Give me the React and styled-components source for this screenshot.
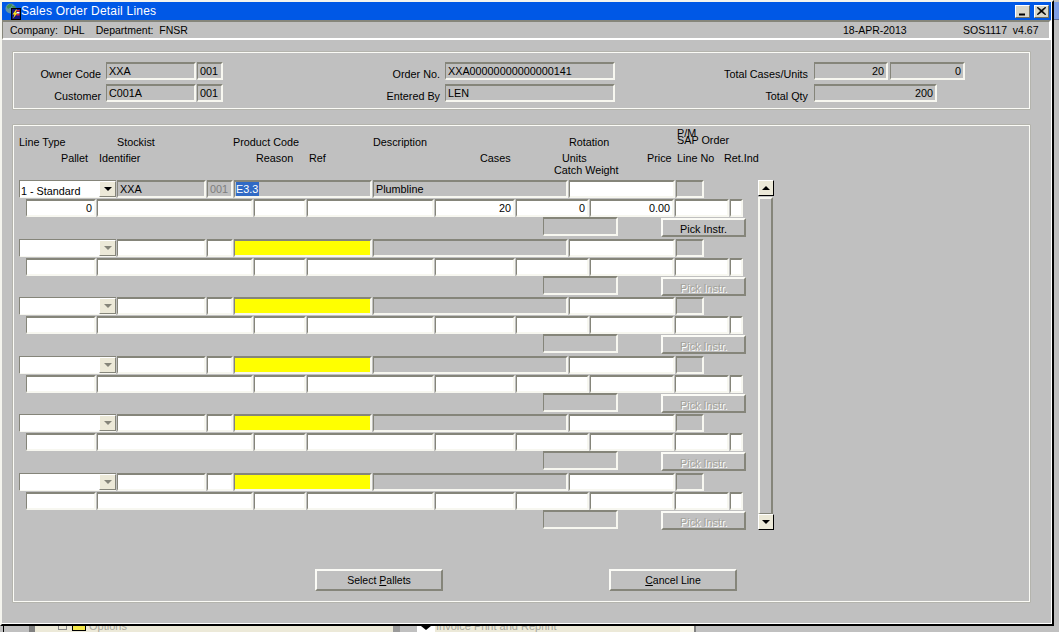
import React from "react";
import styled, { createGlobalStyle } from "styled-components";

const Global = createGlobalStyle`
  html, body { margin: 0; padding: 0; overflow: hidden; background: #c0c0c0; }
  #root { width: 1059px; height: 632px; overflow: hidden; }
  * { box-sizing: border-box; }
`;

const Desktop = styled.div`
  display: grid;
  grid-template-columns: 1054px 5px;
  grid-template-rows: 626px 6px;
  width: 1059px;
  height: 632px;
  font-family: "Liberation Sans", Arial, sans-serif;
  font-size: 10.8px;
  color: #000;
`;

const Win = styled.div`
  display: flex;
  flex-direction: column;
  border-left: 2px solid #f4f4ee;
  border-top: 2px solid #f4f4ee;
  border-right: 2px solid #000;
  border-bottom: 2px solid #000;
  background: #c0c0c0;
  box-shadow: inset -1px -1px 0 #fff;
`;

const SideStrip = styled.div`
  padding-top: 2px;
  background: #c0c0c0;
`;
const SideTitle = styled.div`
  height: 18px;
  background: #7f9fe6;
  border-bottom: 1px solid #5f6f9a;
`;

const BottomStrip = styled.div`
  grid-column: 1 / 3;
  display: flex;
  height: 6px;
  overflow: hidden;
  background: #c0c0c0;
`;
const Seg = styled.div`
  flex: 0 0 ${(p) => p.$w}px;
  background: ${(p) => p.$bg};
  display: flex;
  align-items: flex-start;
  justify-content: ${(p) => (p.$center ? "center" : "flex-start")};
  height: 6px;
  padding-left: ${(p) => p.$pad || 0}px;
  gap: 3px;
`;
const TreeText = styled.span`
  font-size: 11px;
  line-height: 11px;
  margin-top: -5px;
  color: #a5a59b;
  white-space: nowrap;
`;
const FolderGlyph = styled.span`
  flex: 0 0 14px;
  height: 5px;
  background: #f5e94a;
  border-bottom: 1px solid #000;
  border-right: 1px solid #000;
  border-left: 1px solid #000;
`;
const PlusGlyph = styled.span`
  flex: 0 0 9px;
  height: 4px;
  margin-right: 2px;
  border: 1px solid #888;
  border-top: 0;
`;
const ArrowGlyph = styled.span`
  width: 0;
  height: 0;
  border-left: 5px solid transparent;
  border-right: 5px solid transparent;
  border-top: 4px solid #000;
`;

const TitleBar = styled.div`
  display: flex;
  align-items: center;
  height: 18px;
  margin-right: 1px;
  padding: 0 2px 0 3px;
  background: #0058e6;
  color: #fff;
  font-size: 12px;
  letter-spacing: 0.22px;
`;
const TitleText = styled.span`
  margin-left: -1px;
  flex: 1;
`;
const WinBtn = styled.div`
  display: flex;
  align-items: center;
  justify-content: center;
  width: 15px;
  height: 13px;
  margin-left: ${(p) => p.$ml || 0}px;
  background: #d8d6c8;
  border: 1px solid;
  border-color: #fff #6e6e60 #6e6e60 #fff;
`;

const InfoBar = styled.div`
  display: flex;
  align-items: flex-end;
  height: 20px;
  margin-right: 1px;
  padding: 0 9px 1px 7px;
  border-top: 2px solid #85857a;
  border-left: 1px solid #85857a;
  border-bottom: 2px solid #fff;
  border-right: 2px solid #fff;
  font-size: 10.5px;
  line-height: 13px;
`;
const InfoGroup = styled.div`
  display: flex;
  flex: 0 0 ${(p) => p.$w}px;
  gap: 11px;
`;
const InfoCell = styled.span`
  white-space: pre;
`;

const Content = styled.div`
  display: flex;
  flex-direction: column;
  padding: 12px 0 0 11px;
`;

const Panel = styled.div`
  width: 1017px;
  height: ${(p) => p.$h}px;
  margin-bottom: ${(p) => p.$mb || 0}px;
  border: 1px solid #fbfbf6;
  box-shadow: 0 0 0 0.5px #a9a99b;
`;
const TopPanel = styled(Panel)`
  display: flex;
  flex-direction: column;
  gap: 4px;
  padding-top: 9px;
`;
const Row = styled.div`
  display: flex;
  align-items: stretch;
  height: 18px;
  gap: ${(p) => p.$gap ?? 0}px;
  margin-top: ${(p) => p.$mt || 0}px;
  padding-left: ${(p) => p.$pl || 0}px;
`;
const RightLabel = styled.div`
  flex: 0 0 ${(p) => p.$w}px;
  margin-right: ${(p) => p.$mr ?? 5}px;
  text-align: right;
  line-height: 24px;
  white-space: nowrap;
`;

const Field = styled.div`
  flex: 0 0 ${(p) => p.$w}px;
  height: ${(p) => p.$h || 18}px;
  margin-left: ${(p) => p.$ml || 0}px;
  margin-right: ${(p) => p.$mr || 0}px;
  padding: 0 2px 0 2px;
  border: 2px solid;
  border-color: #85857a #f7f7f0 #f7f7f0 #85857a;
  border-width: 2px 2px 2px 1px;
  background: ${(p) => (p.$kind === "input" ? "#fff" : p.$kind === "req" ? "#ffff00" : "#bfbfbf")};
  color: ${(p) => (p.$off ? "#7d7d7d" : "#000")};
  text-align: ${(p) => (p.$right ? "right" : "left")};
  line-height: 15px;
  white-space: nowrap;
  overflow: hidden;
`;
const Selected = styled.span`
  display: inline-block;
  margin-left: -1px;
  padding: 0 1px 0 0;
  background: #316ac5;
  color: #fff;
  line-height: 14px;
`;

const Combo = styled.div`
  flex: 0 0 97px;
  display: flex;
  justify-content: space-between;
  height: 18px;
  padding-left: 1px;
  border-top: 1px solid #85857a;
  border-left: 1px solid #85857a;
  border-bottom: 1px solid #f7f7f0;
  background: #fff;
  line-height: 20px;
`;
const ComboBtn = styled.div`
  display: flex;
  align-items: center;
  justify-content: center;
  width: 17px;
  height: 16px;
  background: #ece9d8;
  border: 1px solid;
  border-color: #fff #85857a #85857a #fff;
`;
const Tri = styled.span`
  width: 0;
  height: 0;
  border-left: 4px solid transparent;
  border-right: 4px solid transparent;
  ${(p) => (p.$up ? "border-bottom" : "border-top")}: 4px solid ${(p) => p.$color || "#000"};
`;

const HeadBlock = styled.div`
  height: 54px;
  padding: 0 0 0 5px;
`;
const HeadRow = styled.div`
  display: flex;
  align-items: flex-end;
  height: ${(p) => p.$h}px;
  line-height: 12px;
  white-space: nowrap;
`;
const HeadCell = styled.div`
  flex: 0 0 ${(p) => p.$w}px;
  text-align: ${(p) => (p.$right ? "right" : "left")};
  margin-left: ${(p) => p.$ml || 0}px;
`;
const SapStack = styled.div`
  display: flex;
  flex-direction: column;
  padding-bottom: 2px;
`;
const Pm = styled.div`
  line-height: 7px;
  height: 7px;
  margin-bottom: -3px;
`;

const GridArea = styled.div`
  display: flex;
  padding-left: 5px;
`;
const Records = styled.div`
  flex: 0 0 739px;
`;
const Record = styled.div`
  height: ${(p) => p.$h}px;
`;
const BtnRow = styled.div`
  display: flex;
  align-items: flex-start;
  margin-left: 524px;
`;
const PickBtn = styled.div`
  flex: 0 0 85px;
  height: 19px;
  margin: 1px 0 0 43px;
  background: #c0c0c0;
  border: 2px solid;
  border-color: #fbfbf6 #85857a #85857a #fbfbf6;
  text-align: center;
  line-height: 18px;
  color: ${(p) => (p.$off ? "#a3a39b" : "#000")};
  text-shadow: ${(p) => (p.$off ? "1px 1px 0 #fff" : "none")};
`;

const Scrollbar = styled.div`
  flex: 0 0 16px;
  display: flex;
  flex-direction: column;
  height: 350px;
`;
const ScrollBtn = styled.div`
  display: flex;
  align-items: center;
  justify-content: center;
  height: 16px;
  background: #ece9d8;
  border: 1px solid;
  border-color: #fff #000 #000 #fff;
`;
const ScrollTrack = styled.div`
  flex: 1;
  margin: 1px 1px 0 0;
  background: #c0c0c0;
  border: 2px solid;
  border-color: #f7f7f0 #85857a #85857a #f7f7f0;
  border-bottom-width: 1px;
`;

const Actions = styled.div`
  display: flex;
  margin: 38px 0 0 301px;
  font-size: 10.5px;
`;
const ActionBtn = styled.div`
  flex: 0 0 128px;
  height: 22px;
  margin-right: ${(p) => p.$mr || 0}px;
  border: 2px solid;
  border-color: #fbfbf6 #85857a #85857a #fbfbf6;
  background: #c0c0c0;
  text-align: center;
  line-height: 18px;
`;
const Key = styled.span`
  text-decoration: underline;
`;

const GlobeIcon = () => (
  <svg width="17" height="17" viewBox="0 0 17 17">
    <circle cx="5.5" cy="5.5" r="5" fill="#5f93a8" />
    <path d="M1.5 3.5l3-2.5 3 .5-1.500 2.500-3 2zM7 3l3 0 1 2-3 1z" fill="#3f8f4f" />
    <rect x="6" y="5" width="10" height="12" fill="#000" />
    <rect x="7" y="6" width="8" height="10" fill="#14147e" />
    <rect x="11.500" y="7" width="3" height="1.500" fill="#e23" />
    <rect x="11.500" y="9" width="3" height="1.500" fill="#fff" />
    <rect x="11.500" y="11" width="3" height="1.500" fill="#e23" />
    <path d="M11 6.500L7.500 11.500h2l-1.500 4 4.500-5.500h-2l1.500-3.500z" fill="#ffe21a" />
  </svg>
);

const CloseGlyph = () => (
  <svg width="9" height="8" viewBox="0 0 9 8">
    <path d="M0.5 0L4.5 3 8.500 0 8.500 1 5.500 4 8.500 7 8.500 8 4.500 5 0.500 8 0.500 7 3.500 4 0.500 1z" fill="#000" stroke="#000" strokeWidth="0.6" />
  </svg>
);
const MinGlyph = () => (
  <svg width="9" height="9" viewBox="0 0 9 9">
    <rect x="1" y="6.500" width="6" height="2" fill="#000" />
  </svg>
);

const heights = [59, 58, 59, 58, 59, 58];

const LineRecord = ({ first, h }) => (
  <Record $h={h}>
    <Row $gap={1}>
      {first ? (
        <Combo>
          1 - Standard
          <ComboBtn><Tri /></ComboBtn>
        </Combo>
      ) : (
        <Combo>
          <span />
          <ComboBtn><Tri $color="#85857a" /></ComboBtn>
        </Combo>
      )}
      <Field $w={89} $kind={first ? "ro" : "input"}>{first ? "XXA" : ""}</Field>
      <Field $w={26} $kind={first ? "ro" : "input"} $off>{first ? "001" : ""}</Field>
      <Field $w={138} $kind={first ? "ro" : "req"}>{first ? <Selected>E3.3</Selected> : ""}</Field>
      <Field $w={195}>{first ? "Plumbline" : ""}</Field>
      <Field $w={106} $kind="input" />
      <Field $w={28} />
    </Row>
    <Row $mt={1} $pl={7} $gap={1}>
      <Field $w={70} $kind="input" $right>{first ? "0" : ""}</Field>
      <Field $w={156} $kind="input" />
      <Field $w={52} $kind="input" />
      <Field $w={127} $kind="input" />
      <Field $w={80} $kind="input" $right>{first ? "20" : ""}</Field>
      <Field $w={73} $kind="input" $right>{first ? "0" : ""}</Field>
      <Field $w={84} $kind="input" $right>{first ? "0.00" : ""}</Field>
      <Field $w={54} $kind="input" />
      <Field $w={13} $kind="input" />
    </Row>
    <BtnRow>
      <Field $w={75} $h={19} />
      <PickBtn $off={!first}>Pick Instr.</PickBtn>
    </BtnRow>
  </Record>
);

export default function App() {
  return (
    <Desktop>
      <Global />
      <Win>
        <TitleBar>
          <GlobeIcon />
          <TitleText>Sales Order Detail Lines</TitleText>
          <WinBtn><MinGlyph /></WinBtn>
          <WinBtn $ml={4}><CloseGlyph /></WinBtn>
        </TitleBar>
        <InfoBar>
          <InfoGroup $w={833}>
            <InfoCell>Company:  DHL</InfoCell>
            <InfoCell>Department:  FNSR</InfoCell>
          </InfoGroup>
          <InfoGroup $w={120}>
            <InfoCell>18-APR-2013</InfoCell>
          </InfoGroup>
          <InfoCell>SOS1117  v4.67</InfoCell>
        </InfoBar>
        <Content>
          <TopPanel $h={57} $mb={16}>
            <Row>
              <RightLabel $w={87}>Owner Code</RightLabel>
              <Field $w={90}>XXA</Field>
              <Field $w={26} $ml={1}>001</Field>
              <RightLabel $w={217}>Order No.</RightLabel>
              <Field $w={170}>XXA00000000000000141</Field>
              <RightLabel $w={193} $mr={6}>Total Cases/Units</RightLabel>
              <Field $w={74} $right>20</Field>
              <Field $w={75} $ml={2} $right>0</Field>
            </Row>
            <Row>
              <RightLabel $w={87}>Customer</RightLabel>
              <Field $w={90}>C001A</Field>
              <Field $w={26} $ml={1}>001</Field>
              <RightLabel $w={217}>Entered By</RightLabel>
              <Field $w={170}>LEN</Field>
              <RightLabel $w={193} $mr={6}>Total Qty</RightLabel>
              <Field $w={123} $right>200</Field>
            </Row>
          </TopPanel>
          <Panel $h={477}>
            <HeadBlock>
              <HeadRow $h={22}>
                <HeadCell $w={98}>Line Type</HeadCell>
                <HeadCell $w={116}>Stockist</HeadCell>
                <HeadCell $w={140}>Product Code</HeadCell>
                <HeadCell $w={196}>Description</HeadCell>
                <HeadCell $w={108}>Rotation</HeadCell>
                <SapStack>
                  <Pm>P/M</Pm>
                  <div>SAP Order</div>
                </SapStack>
              </HeadRow>
              <HeadRow $h={16}>
                <HeadCell $w={69} $right>Pallet</HeadCell>
                <HeadCell $w={157} $ml={11}>Identifier</HeadCell>
                <HeadCell $w={53}>Reason</HeadCell>
                <HeadCell $w={171}>Ref</HeadCell>
                <HeadCell $w={31}>Cases</HeadCell>
                <HeadCell $w={85} $ml={51}>Units</HeadCell>
                <HeadCell $w={30}>Price</HeadCell>
                <HeadCell $w={47}>Line No</HeadCell>
                <HeadCell $w={40}>Ret.Ind</HeadCell>
              </HeadRow>
              <HeadRow $h={12}>
                <HeadCell $w={70} $ml={535}>Catch Weight</HeadCell>
              </HeadRow>
            </HeadBlock>
            <GridArea>
              <Records>
                {heights.map((h, i) => (
                  <LineRecord key={i} first={i === 0} h={h} />
                ))}
              </Records>
              <Scrollbar>
                <ScrollBtn><Tri $up /></ScrollBtn>
                <ScrollTrack />
                <ScrollBtn><Tri /></ScrollBtn>
              </Scrollbar>
            </GridArea>
            <Actions>
              <ActionBtn $mr={166}>Select <Key>P</Key>allets</ActionBtn>
              <ActionBtn><Key>C</Key>ancel Line</ActionBtn>
            </Actions>
          </Panel>
        </Content>
      </Win>
      <SideStrip>
        <SideTitle />
      </SideStrip>
      <BottomStrip>
        <Seg $w={3} $bg="#c0c0c0" />
        <Seg $w={1} $bg="#000" />
        <Seg $w={25} $bg="#c0c0c0" />
        <Seg $w={6} $bg="#808080" />
        <Seg $w={358} $bg="#ece9d8" $pad={23}>
          <PlusGlyph />
          <FolderGlyph />
          <TreeText>Options</TreeText>
        </Seg>
        <Seg $w={7} $bg="#9a9a9a" />
        <Seg $w={17} $bg="#c0c0c0" />
        <Seg $w={18} $bg="#fff" $center>
          <ArrowGlyph />
        </Seg>
        <Seg $w={245} $bg="#ece9d8" $pad={1}>
          <TreeText>Invoice Print and Reprint</TreeText>
        </Seg>
        <Seg $w={14} $bg="#f6f4e8" />
        <Seg $w={2} $bg="#808080" />
      </BottomStrip>
    </Desktop>
  );
}
